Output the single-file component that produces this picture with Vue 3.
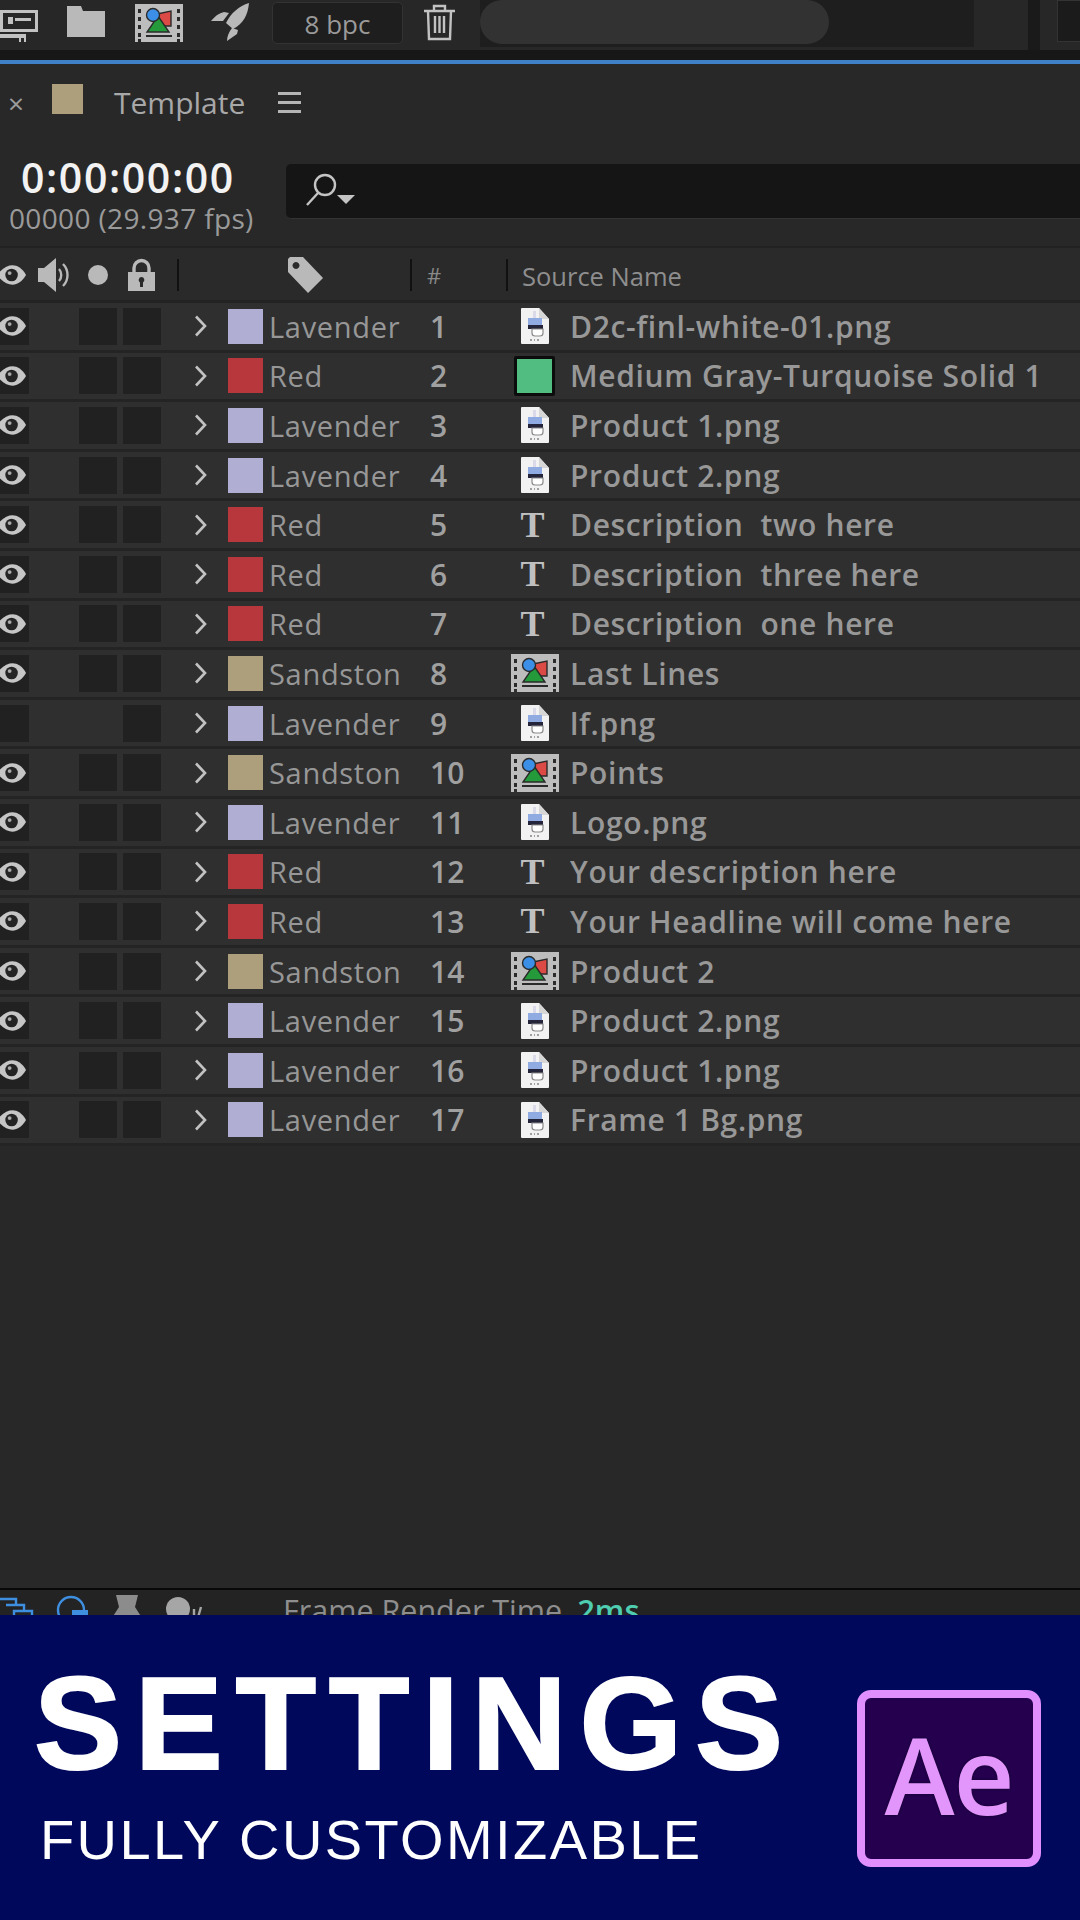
<script setup>
const colors = {
  Lavender: '#b1aed3',
  Red: '#b8373c',
  Sandston: '#ae9f7c'
}

const layers = [
  { label: 'Lavender', type: 'png', name: 'D2c-finl-white-01.png' },
  { label: 'Red', type: 'solid', name: 'Medium Gray-Turquoise Solid 1' },
  { label: 'Lavender', type: 'png', name: 'Product 1.png' },
  { label: 'Lavender', type: 'png', name: 'Product 2.png' },
  { label: 'Red', type: 'text', name: 'Description  two here' },
  { label: 'Red', type: 'text', name: 'Description  three here' },
  { label: 'Red', type: 'text', name: 'Description  one here' },
  { label: 'Sandston', type: 'comp', name: 'Last Lines' },
  { label: 'Lavender', type: 'png', name: 'lf.png', hidden: true },
  { label: 'Sandston', type: 'comp', name: 'Points' },
  { label: 'Lavender', type: 'png', name: 'Logo.png' },
  { label: 'Red', type: 'text', name: 'Your description here' },
  { label: 'Red', type: 'text', name: 'Your Headline will come here' },
  { label: 'Sandston', type: 'comp', name: 'Product 2' },
  { label: 'Lavender', type: 'png', name: 'Product 2.png' },
  { label: 'Lavender', type: 'png', name: 'Product 1.png' },
  { label: 'Lavender', type: 'png', name: 'Frame 1 Bg.png' }
]
</script>

<template>
  <div class="screen">
    <svg class="defs" aria-hidden="true">
      <symbol id="comp" viewBox="0 0 48 38">
        <path fill="#bdbdbd" d="M0 0h48v38h-3v-3h-3v3H6v-3H3v3H0z" />
        <path fill="#2a2a2a" d="M3 5h3v4H3zM3 13h3v4H3zM3 21h3v4H3zM3 29h3v4H3zM42 5h3v4h-3zM42 13h3v4h-3zM42 21h3v4h-3zM42 29h3v4h-3zM11 31h26v2H11z" />
        <path fill="#dc4a46" stroke="#2a2a2a" stroke-width="1.4" d="M22 10l14-3v15H24z" />
        <path fill="#259a3a" stroke="#2a2a2a" stroke-width="1.4" d="M23 12l11 16H12z" />
        <circle cx="18" cy="11" r="6.5" fill="#3b8fe6" stroke="#2a2a2a" stroke-width="1.4" />
      </symbol>
      <symbol id="png" viewBox="0 0 28 36">
        <path fill="#f2f2f2" d="M0 1a1 1 0 0 1 1-1h17l10 11v24a1 1 0 0 1-1 1H1a1 1 0 0 1-1-1z" />
        <path fill="#d6d6d6" d="M18 0l10 11H18z" />
        <path fill="#8fabe2" d="M7 10h14v8H7z" />
        <path fill="#d9d9ea" d="M12 3h3v7h-3z" />
        <path fill="#24243a" d="M7 17h15v4H7z" />
        <path fill="#fff" stroke="#8a8a8a" stroke-width="1.2" d="M11 21h11v4a3 3 0 0 1-3 3h-5a3 3 0 0 1-3-3z" />
        <path fill="#a0a0a0" d="M9 31h2v2H9zM13 31h1v2h-1zM16 31h2v2h-2z" />
      </symbol>
      <symbol id="eye" viewBox="0 0 28 20">
        <path fill="#c6c6c6" d="M-3 10C2 3 8 0 13 0s10 3 14 10c-4 7-9 10-14 10S2 17-3 10z" />
        <circle cx="12" cy="10" r="6.5" fill="#242424" />
        <circle cx="10" cy="8" r="2" fill="#aaa" />
      </symbol>
    </svg>

    <header class="toolbar">
      <svg class="tool-flow" width="38" height="34" viewBox="0 0 38 34">
        <path fill="#c2c2c2" d="M0 2h38v22H0zM0 26h26v8h-2v-4h-3v4h-2v-4H0z" />
        <path fill="#272727" d="M3 5h32v16H3z" />
        <path fill="#c2c2c2" d="M8 9h5v7H8zM15 10h16v3H15z" />
      </svg>
      <svg class="tool-folder" width="38" height="31" viewBox="0 0 38 31">
        <path fill="#b9b9b9" d="M0 0h14l2 5h22v26H0z" />
      </svg>
      <svg class="tool-comp" width="50" height="38"><use href="#comp" /></svg>
      <svg class="tool-rocket" width="38" height="38" viewBox="0 0 38 38">
        <path fill="#b9b9b9" d="M38 0c-1 12-6 21-16 26l-7-6C20 10 28 3 38 0zM13 9l5 1-6 8H0c4-5 8-8 13-9zM27 27l-1 4-10 7c0-5 2-9 5-13z" />
      </svg>
      <div class="bpc">8 bpc</div>
      <svg class="tool-trash" width="31" height="36" viewBox="0 0 31 36" fill="none" stroke="#c2c2c2" stroke-width="2.4">
        <path d="M0 7h31M10 7V2h11v5M4 7l1 28h21l1-28M11 12v17M15.5 12v17M20 12v17" />
      </svg>
      <div class="search-track"><div class="pill"></div></div>
      <div class="tool-end"></div>
      <div class="tool-gap"></div>
      <div class="tool-right"><div class="tool-right-box"></div></div>
    </header>
    <div class="blackout"></div>
    <div class="blue-line"></div>

    <main class="panel">
      <div class="tab">
        <span class="close">×</span>
        <span class="tab-swatch"></span>
        <span class="tab-title">Template</span>
        <span class="burger"><i></i><i></i><i></i></span>
      </div>

      <div class="time-row">
        <div class="time">
          <div class="timecode">0:00:00:00</div>
          <div class="fps">00000 (29.937 fps)</div>
        </div>
        <div class="search">
          <svg width="52" height="34" viewBox="0 0 52 34" fill="none">
            <circle cx="20" cy="12" r="10" stroke="#c4c4c4" stroke-width="2.4" />
            <path stroke="#c4c4c4" stroke-width="2.4" d="M13 20L2 32" />
            <path fill="#c4c4c4" d="M32 22h18l-9 9z" />
          </svg>
        </div>
      </div>

      <div class="head">
        <svg class="head-eye" width="27" height="20"><use href="#eye" /></svg>
        <svg class="head-audio" width="34" height="34" viewBox="0 0 34 34" fill="none">
          <path fill="#b9b9b9" d="M0 10h6l12-10v34L6 24H0z" />
          <path stroke="#b9b9b9" stroke-width="2.4" d="M21 11c3 3 3 9 0 12M25 6c6 6 6 16 0 22" />
        </svg>
        <span class="head-dot"></span>
        <svg class="head-lock" width="27" height="32" viewBox="0 0 27 32">
          <path fill="none" stroke="#b9b9b9" stroke-width="3.4" d="M6 14V9a7.500 7.500 0 0 1 15 0v5" />
          <path fill="#b9b9b9" fill-rule="evenodd" d="M0 13h27v19H0zM13.500 18a3 3 0 0 0-1.500 5.500V28h3v-4.500A3 3 0 0 0 13.500 18z" />
        </svg>
        <span class="rule rule-a"></span>
        <svg class="head-tag" width="35" height="36" viewBox="0 0 35 36">
          <path fill="#b9b9b9" fill-rule="evenodd" d="M2 0h13l20 21-15 15L0 15V2zM8 5a3.500 3.500 0 1 0 .01 0z" />
        </svg>
        <span class="rule rule-b"></span>
        <span class="hash">#</span>
        <span class="rule rule-c"></span>
        <span class="source">Source Name</span>
      </div>

      <div class="layers">
        <div v-for="(layer, i) in layers" :key="i" class="layer">
          <span class="cell eye-cell">
            <svg v-if="!layer.hidden" width="27" height="20"><use href="#eye" /></svg>
          </span>
          <span class="cell cell-a" :class="{ off: layer.hidden }"></span>
          <span class="cell cell-b"></span>
          <svg class="chevron" width="13" height="22" viewBox="0 0 13 22" fill="none">
            <path stroke="#c2c2c2" stroke-width="2.600" d="M2 1.500l9 9.500-9 9.500" />
          </svg>
          <span class="swatch" :style="{ background: colors[layer.label] }"></span>
          <span class="label">{{ layer.label }}</span>
          <span class="num">{{ i + 1 }}</span>
          <span class="kind">
            <svg v-if="layer.type === 'png'" width="28" height="36"><use href="#png" /></svg>
            <svg v-else-if="layer.type === 'comp'" width="48" height="38"><use href="#comp" /></svg>
            <span v-else-if="layer.type === 'solid'" class="solid"></span>
            <span v-else class="text-t">T</span>
          </span>
          <span class="name">{{ layer.name }}</span>
        </div>
      </div>
    </main>

    <div class="status">
      <div class="status-icons">
        <svg width="34" height="30" viewBox="0 0 34 30" fill="none" stroke="#3f8fe0" stroke-width="2.400">
          <path d="M-2 4h18v6M6 10h18v6M14 16h18v14H14z" />
        </svg>
        <svg class="st-mag" width="34" height="34" viewBox="0 0 34 34" fill="none">
          <circle cx="15" cy="15" r="13" stroke="#3f8fe0" stroke-width="2.400" />
          <path fill="#3f8fe0" d="M16 15h16v14H16z" />
        </svg>
        <svg class="st-flask" width="34" height="30" viewBox="0 0 34 30">
          <path fill="#8c8c8c" d="M6 0h22l-3 12 9 14H0l9-14z" />
        </svg>
        <svg class="st-dots" width="36" height="30" viewBox="0 0 36 30">
          <circle cx="12" cy="14" r="12" fill="#a6a6a6" />
          <path stroke="#a6a6a6" stroke-width="2.400" d="M28 14v14M35 12l-4 14" />
        </svg>
      </div>
      <span class="render">Frame Render Time</span>
      <span class="ms">2ms</span>
    </div>

    <footer class="banner">
      <div class="banner-text">
        <div class="title">SETTINGS</div>
        <div class="subtitle">FULLY CUSTOMIZABLE</div>
      </div>
      <div class="ae-logo">Ae</div>
    </footer>
  </div>
</template>

<style>
html, body {
  margin: 0;
  background: #272727;
}
</style>

<style scoped>
.screen {
  width: 1080px;
  height: 1920px;
  display: flex;
  flex-direction: column;
  overflow: hidden;
  background: #282828;
  font-family: "Open Sans", "Noto Sans", sans-serif;
}

.defs {
  position: absolute;
  width: 0;
  height: 0;
}

svg {
  display: block;
  flex: none;
  overflow: visible;
}

.toolbar {
  height: 50px;
  flex: none;
  display: flex;
  align-items: center;
  background: #272727;
  overflow: hidden;
}

.tool-flow { margin-left: 0; }
.tool-folder { margin-left: 29px; margin-top: -8px; }
.tool-comp { margin-left: 29px; margin-top: -4px; }
.tool-rocket { margin-left: 27px; margin-top: -6px; }

.bpc {
  width: 131px;
  height: 42px;
  margin-left: 23px;
  margin-top: -4px;
  background: #1e1e1e;
  border: 1px solid #333;
  border-radius: 5px;
  box-sizing: border-box;
  color: #9a9a9a;
  font-size: 26px;
  line-height: 43px;
  text-align: center;
}

.tool-trash { margin-left: 21px; margin-top: -6px; }

.search-track {
  width: 494px;
  height: 47px;
  margin-left: 25px;
  align-self: flex-start;
  background: #1e1e1e;
}

.pill {
  width: 349px;
  height: 44px;
  background: #323232;
  border-radius: 22px;
}

.tool-end {
  width: 54px;
  height: 50px;
  background: #272727;
}

.tool-gap {
  width: 12px;
  height: 50px;
  background: #1a1a1a;
}

.tool-right {
  flex: 1;
  height: 50px;
  background: #272727;
}

.tool-right-box {
  width: 100%;
  height: 40px;
  margin-left: 17px;
  background: #1b1b1b;
  border: 1px solid #333;
}

.blackout {
  height: 10px;
  flex: none;
  background: #171717;
}

.blue-line {
  height: 4px;
  flex: none;
  background: #3f80c6;
}

.panel {
  flex: 1;
  min-height: 0;
  background: #282828;
}

.tab {
  height: 82px;
  display: flex;
  align-items: center;
  padding-bottom: 5px;
  box-sizing: border-box;
}

.close {
  width: 16px;
  margin-left: 8px;
  color: #9c9c9c;
  font-size: 28px;
  line-height: 1;
  text-align: center;
}

.tab-swatch {
  width: 31px;
  height: 30px;
  margin-left: 28px;
  margin-top: -8px;
  background: #ae9f7c;
}

.tab-title {
  margin-left: 31px;
  color: #a8a8a8;
  font-size: 30px;
  line-height: 40px;
}

.burger {
  display: flex;
  flex-direction: column;
  gap: 6px;
  margin-left: 33px;
}

.burger i {
  display: block;
  width: 23px;
  height: 3px;
  background: #b5b5b5;
}

.time-row {
  height: 102px;
  display: flex;
  align-items: flex-start;
  border-bottom: 2px solid #222;
  box-sizing: border-box;
}

.time {
  width: 286px;
  flex: none;
  padding-left: 10px;
  box-sizing: border-box;
}

.timecode {
  margin-left: 11px;
  margin-top: 10px;
  color: #f2f2f2;
  font-size: 41px;
  font-weight: 600;
  line-height: 42px;
  letter-spacing: 1.6px;
}

.fps {
  margin-left: -1px;
  margin-top: 2px;
  color: #9a9a9a;
  font-size: 28px;
  line-height: 36px;
  letter-spacing: 0.35px;
  white-space: nowrap;
}

.search {
  flex: 1;
  height: 55px;
  margin-top: 18px;
  padding: 9px 0 0 19px;
  box-sizing: border-box;
  background: #151515;
  border-radius: 5px 0 0 5px;
  border-bottom: 1px solid #333;
}

.head {
  height: 55px;
  display: flex;
  align-items: center;
  padding-top: 2px;
  background: #2a2a2a;
  border-bottom: 3px solid #232323;
  box-sizing: border-box;
}

.head-audio { margin-left: 11px; }

.head-dot {
  width: 20px;
  height: 20px;
  margin-left: 16px;
  border-radius: 50%;
  background: #b9b9b9;
}

.head-lock { margin-left: 20px; }

.rule {
  width: 2px;
  height: 32px;
  background: #111;
}

.rule-a { margin-left: 22px; }
.head-tag { margin-left: 109px; }
.rule-b { margin-left: 87px; }

.hash {
  margin-left: 15px;
  width: 14px;
  color: #888;
  font-size: 22px;
  line-height: 30px;
}

.rule-c { margin-left: 65px; }

.source {
  margin-left: 14px;
  padding-top: 2px;
  color: #8e8e8e;
  font-size: 25.500px;
  line-height: 36px;
}

.layer {
  height: 49.6px;
  display: flex;
  align-items: center;
  box-sizing: border-box;
  background: #2f2f2f;
  border-bottom: 3px solid #242424;
}

.cell {
  width: 38px;
  height: 37px;
  flex: none;
  background: #212121;
}

.eye-cell {
  width: 29px;
  display: flex;
  align-items: center;
}

.cell-a { margin-left: 50px; }
.cell-b { margin-left: 6px; }
.off { background: transparent; }

.chevron { margin-left: 33px; }

.swatch {
  width: 35px;
  height: 35px;
  flex: none;
  margin-left: 21px;
}

.label {
  width: 161px;
  flex: none;
  margin-left: 6px;
  padding-top: 1px;
  color: #979797;
  font-size: 29px;
  line-height: 40px;
  letter-spacing: 0.7px;
}

.num {
  width: 81px;
  flex: none;
  padding-top: 1px;
  color: #a0a0a0;
  font-size: 30px;
  font-weight: 600;
  line-height: 40px;
}

.kind {
  width: 47px;
  height: 40px;
  flex: none;
  display: flex;
  align-items: center;
  justify-content: center;
}

.solid {
  width: 35px;
  height: 34px;
  margin-left: -1px;
  background: #52bd80;
  border: 3px solid #0c0c0c;
  border-radius: 2px;
}

.text-t {
  margin-left: -4px;
  color: #c0c0c0;
  font-family: "Liberation Serif", serif;
  font-size: 36px;
  font-weight: 700;
  line-height: 40px;
}

.name {
  margin-left: 12px;
  padding-top: 1px;
  color: #989898;
  font-size: 30px;
  font-weight: 600;
  line-height: 40px;
  letter-spacing: 0.65px;
  white-space: pre;
}

.status {
  height: 25px;
  flex: none;
  display: flex;
  align-items: flex-start;
  overflow: hidden;
  background: #232323;
  border-top: 2px solid #080808;
}

.status-icons {
  display: flex;
  align-items: flex-start;
  padding-top: 5px;
}

.st-mag { margin-left: 22px; }
.st-flask { margin-left: 20px; }
.st-dots { margin-left: 22px; }

.render {
  margin-left: 81px;
  color: #8e8e8e;
  font-size: 30.500px;
  line-height: 40px;
}

.ms {
  margin-left: 15px;
  color: #4fcdb0;
  font-size: 31px;
  font-weight: 600;
  line-height: 40px;
}

.banner {
  height: 305px;
  flex: none;
  display: flex;
  justify-content: space-between;
  background: #00085c;
  color: #fff;
  font-family: "Liberation Sans", Arial, sans-serif;
}

.banner-text {
  padding: 46px 0 0 34px;
}

.title {
  font-size: 132px;
  font-weight: 700;
  line-height: 126px;
  letter-spacing: 12.700px;
  -webkit-text-stroke: 2px #fff;
  white-space: nowrap;
}

.subtitle {
  margin-top: 23px;
  margin-left: 6px;
  font-size: 56px;
  line-height: 60px;
  letter-spacing: 2.4px;
  white-space: nowrap;
}

.ae-logo {
  width: 184px;
  height: 177px;
  margin: 75px 39px 0 0;
  box-sizing: border-box;
  border: 8px solid #e08ffc;
  border-radius: 14px;
  background: #25004f;
  color: #e295fb;
  font-family: "Open Sans", sans-serif;
  font-size: 106px;
  font-weight: 600;
  line-height: 152px;
  letter-spacing: -1px;
  text-align: center;
  text-shadow: 0 0 3px #12002b;
}
</style>
